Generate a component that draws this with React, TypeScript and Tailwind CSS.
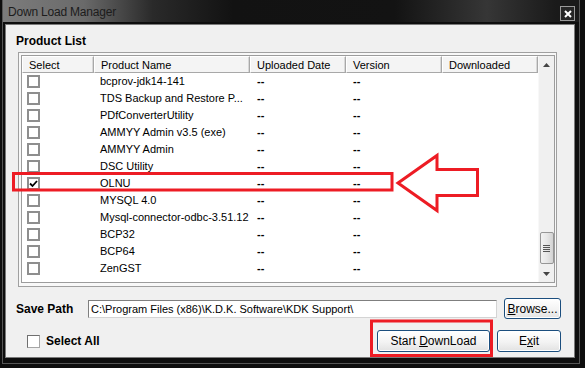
const products = [
  "bcprov-jdk14-141",
  "TDS Backup and Restore P...",
  "PDfConverterUtility",
  "AMMYY Admin v3.5 (exe)",
  "AMMYY Admin",
  "DSC Utility",
  "OLNU",
  "MYSQL 4.0",
  "Mysql-connector-odbc-3.51.12",
  "BCP32",
  "BCP64",
  "ZenGST",
];

function Check({ checked }: { checked?: boolean }) {
  return (
    <div className="w-[13px] h-[13px] border-2 border-[#8e8e8e] bg-white flex items-center justify-center">
      {checked && (
        <svg width="9" height="9" viewBox="0 0 9 9">
          <path d="M1 4.5 L3.5 7 L8 2" stroke="#000" strokeWidth="1.8" fill="none" />
        </svg>
      )}
    </div>
  );
}

function HeaderCell({ label, w }: { label: string; w: string }) {
  return (
    <div
      className={`${w} h-full pl-[6px] leading-[16px] bg-[#f4f4f4] border border-[#a8a8a8] border-l-white border-t-white shadow-[inset_-1px_0_0_#d8d8d8]`}
    >
      {label}
    </div>
  );
}

function Button({ children, w }: { children: React.ReactNode; w: string }) {
  return (
    <div
      className={`${w} h-full rounded-[3px] border border-[#1b4e7e] bg-[linear-gradient(180deg,#ffffff_0%,#f3f3f3_55%,#e2e2e2_100%)] shadow-[inset_0_0_0_1px_#ffffff] flex items-center justify-center text-[12px] text-black`}
    >
      {children}
    </div>
  );
}

export default function App() {
  return (
    <div className="w-[585px] h-[368px] bg-[#0e0e0e] pl-[2px] pr-[5px] pb-[4px] relative overflow-hidden font-['Liberation_Sans',Arial,sans-serif]">
      <div className="h-full flex flex-col border-x border-b border-[#565656]">
        {/* title bar */}
        <div className="h-[22px] shrink-0 flex items-center pl-[5px] pr-[4px] bg-[linear-gradient(90deg,#7c7c7c_0%,#6a6a6a_14%,#2a2a2a_26%,#121212_40%,#131313_68%,#363636_84%,#1a1a1a_96%)]">
          <span className="text-[12px] tracking-[-0.2px] text-[#1c1c1c] pt-[2px]">
            Down Load Manager
          </span>
          <div className="ml-auto mt-[5px] w-[15px] h-[15px] border border-[#9a9a9a] bg-[#262626] flex items-center justify-center">
            <svg width="8" height="8" viewBox="0 0 8 8">
              <path d="M1 1 L7 7 M7 1 L1 7" stroke="#fff" strokeWidth="2" />
            </svg>
          </div>
        </div>

        <div className="flex-1 pl-[2px] pr-[4px] pt-[2px] pb-[5px]">
          <div className="h-full border border-[#7a7a7a] bg-[#f0f0f0] flex flex-col text-black">
            <div className="pl-[10px] pt-[9px] text-[12px] font-bold leading-[14px]">
              Product List
            </div>

            {/* list */}
            <div className="ml-[12px] mt-[4px] w-[539px] h-[235px] shrink-0 border border-[#a0a0a0] pt-[2px] pl-[2px] pr-[1px] pb-[3px] bg-[#f8f8f8]">
              <div className="h-full border border-[#9c9c9c] bg-white flex text-[11px]">
                <div className="flex-1 flex flex-col">
                  <div className="h-[17px] flex shrink-0">
                    <HeaderCell label="Select" w="w-[72px]" />
                    <HeaderCell label="Product Name" w="w-[156px]" />
                    <HeaderCell label="Uploaded Date" w="w-[96px]" />
                    <HeaderCell label="Version" w="w-[96px]" />
                    <HeaderCell label="Downloaded" w="w-[96px]" />
                  </div>
                  {products.map((name, i) => (
                    <div key={name} className="h-[17px] flex items-center shrink-0">
                      <div className="w-[72px] pl-[5px]">
                        <Check checked={i === 6} />
                      </div>
                      <div className="w-[156px] pl-[6px] whitespace-nowrap">{name}</div>
                      <div className="w-[96px] pl-[7px] font-bold">--</div>
                      <div className="w-[96px] pl-[7px] font-bold">--</div>
                      <div className="w-[96px]"></div>
                    </div>
                  ))}
                </div>

                {/* scrollbar */}
                <div className="w-[16px] flex flex-col bg-[#f0f0f0] border-l border-[#f8f8f8]">
                  <div className="h-[17px] flex items-center justify-center">
                    <svg width="7" height="4" viewBox="0 0 7 4">
                      <path d="M0 4 L3.5 0 L7 4 Z" fill="#444" />
                    </svg>
                  </div>
                  <div className="flex-1 flex flex-col justify-end items-center pb-[1px]">
                    <div className="w-[14px] h-[32px] rounded-[2px] border border-[#969696] bg-[linear-gradient(90deg,#f2f2f2_0%,#e6e6e6_50%,#d2d2d2_100%)] flex flex-col items-center justify-center gap-[1px]">
                      <div className="w-[7px] h-[1px] bg-[#555]" />
                      <div className="w-[7px] h-[1px] bg-[#555]" />
                      <div className="w-[7px] h-[1px] bg-[#555]" />
                      <div className="w-[7px] h-[1px] bg-[#555]" />
                    </div>
                  </div>
                  <div className="h-[17px] flex items-center justify-center">
                    <svg width="7" height="4" viewBox="0 0 7 4">
                      <path d="M0 0 L7 0 L3.5 4 Z" fill="#444" />
                    </svg>
                  </div>
                </div>
              </div>
            </div>

            {/* save path */}
            <div className="mt-[11px] h-[21px] flex items-center pl-[10px] pr-[12px] shrink-0">
              <div className="w-[72px] text-[12px] font-bold">Save Path</div>
              <div className="w-[409px] h-[18px] border border-[#7f7f7f] border-b-[#d4d4d4] border-r-[#d4d4d4] bg-white pl-[2px] text-[11px] leading-[16px] whitespace-nowrap overflow-hidden">
                C:\Program Files (x86)\K.D.K. Software\KDK Support\
              </div>
              <div className="ml-[7px] h-full">
                <Button w="w-[57px]">
                  <span>
                    <u>B</u>rowse...
                  </span>
                </Button>
              </div>
            </div>

            {/* bottom row */}
            <div className="mt-[11px] h-[22px] flex items-start pr-[13px] shrink-0">
              <div className="ml-[21px] mt-[2px] flex items-center gap-[6px]">
                <div className="w-[13px] h-[13px] border border-[#a5a5a5] border-t-[#6f6f6f] border-l-[#6f6f6f] bg-white" />
                <span className="text-[12px] font-bold">Select All</span>
              </div>
              <div className="ml-auto flex h-full gap-[7px]">
                <Button w="w-[113px]">
                  <span>
                    Start <u>D</u>ownLoad
                  </span>
                </Button>
                <Button w="w-[64px]">
                  <span>
                    E<u>x</u>it
                  </span>
                </Button>
              </div>
            </div>
          </div>
        </div>
      </div>

      {/* red annotations */}
      <svg
        className="absolute inset-0 pointer-events-none"
        width="585"
        height="368"
        viewBox="0 0 585 368"
      >
        <rect x="13.5" y="173.5" width="378.5" height="16.5" fill="none" stroke="#ed1c24" strokeWidth="3" />
        <polygon
          points="398,183 437,155.5 437,169.5 477.5,169.5 477.5,195.5 437,195.5 437,210.5"
          fill="none"
          stroke="#ed1c24"
          strokeWidth="3"
          strokeLinejoin="miter"
        />
        <rect x="371.5" y="321" width="120" height="34.5" fill="none" stroke="#ed1c24" strokeWidth="3" />
      </svg>
    </div>
  );
}
